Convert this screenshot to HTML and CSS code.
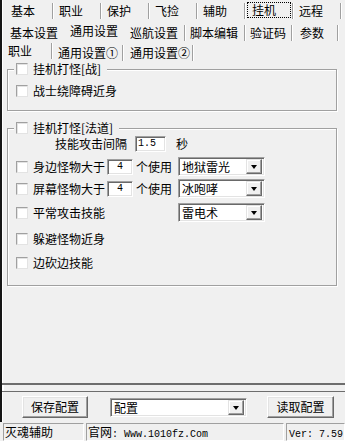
FILE: index.html
```html
<!DOCTYPE html>
<html lang="zh-CN">
<head>
    <meta charset="UTF-8">
    <title>灭魂辅助</title>
    <link rel="stylesheet" href="styles.css">
</head>
<body>
    <div class="window">
        <div class="main">
            <div class="tabs r1">
                <span class="tab">基本</span>
                <span class="tab">职业</span>
                <span class="tab">保护</span>
                <span class="tab">飞捡</span>
                <span class="tab">辅助</span>
                <span class="tab on"><span class="focus">挂机</span></span>
                <span class="tab">远程</span>
            </div>
            <div class="tabs r2">
                <span class="tab w60 pre">基本设置</span>
                <span class="tab w60 on">通用设置</span>
                <span class="tab w60">巡航设置</span>
                <span class="tab w60">脚本编辑</span>
                <span class="tab w47">验证码</span>
                <span class="tab w46">参数</span>
            </div>
            <div class="tabs r3">
                <span class="tab w49 on">职业</span>
                <span class="tab w71">通用设置①</span>
                <span class="tab w70">通用设置②</span>
            </div>

            <div class="group g1">
                <div class="group-title"><span class="cb"></span>挂机打怪[战]</div>
                <div class="row"><span class="cb"></span>战士绕障碍近身</div>
            </div>

            <div class="group g2">
                <div class="group-title"><span class="cb"></span>挂机打怪[法道]</div>
                <div class="row ra">
                    技能攻击间隔
                    <span class="field wide">1.5</span>
                    <span class="unit">秒</span>
                </div>
                <div class="row rb">
                    <span class="cb"></span>身边怪物大于
                    <span class="field">4</span>
                    <span class="use">个使用</span>
                    <span class="select"><span class="val">地狱雷光</span><span class="drop"></span></span>
                </div>
                <div class="row rc">
                    <span class="cb"></span>屏幕怪物大于
                    <span class="field">4</span>
                    <span class="use">个使用</span>
                    <span class="select"><span class="val">冰咆哮</span><span class="drop"></span></span>
                </div>
                <div class="row rd">
                    <span class="cb"></span>平常攻击技能
                    <span class="select push"><span class="val">雷电术</span><span class="drop"></span></span>
                </div>
                <div class="row re"><span class="cb"></span>躲避怪物近身</div>
                <div class="row rf"><span class="cb"></span>边砍边技能</div>
            </div>

            <div class="spacer"></div>
            <div class="sep"></div>

            <div class="actions">
                <span class="btn save">保存配置</span>
                <span class="select cfg"><span class="val">配置</span><span class="drop"></span></span>
                <span class="btn load">读取配置</span>
            </div>
        </div>

        <div class="status">
            <span class="pane p1">灭魂辅助</span>
            <span class="pane p2">官网<span class="mono">: Www.1010fz.Com</span></span>
            <span class="pane p3"><span class="mono">Ver: 7.59</span></span>
        </div>
    </div>
</body>
</html>
```

FILE: styles.css
```css
* {
    box-sizing: border-box;
}

body {
    margin: 0;
    background-color: #f0f0f0;
    color: #000;
    font-family: "Noto Sans CJK SC", "Noto Sans", sans-serif;
    font-size: 12px;
    line-height: 14px;
}

.window {
    width: 345px;
    height: 441px;
    display: flex;
    flex-direction: column;
    overflow: hidden;
}

.main {
    height: 422px;
    display: flex;
    flex-direction: column;
    border-left: 2px solid #161616;
    box-shadow: inset 1px 0 #fff;
}

/* tab strips */
.tabs {
    display: flex;
    padding-left: 3px;
    white-space: nowrap;
}

.r1 { height: 22px; }
.r2 { height: 20px; }
.r3 { height: 18px; padding-left: 1px; }

.tab {
    height: 16px;
    margin-top: 3px;
    line-height: 16px;
    padding-left: 6px;
    border-right: 1px solid #a0a0a0;
    box-shadow: 1px 0 #fff;
}

.r1 .tab { width: 48px; }

.r1 .on {
    padding-left: 2px;
    padding-right: 1px;
}

.focus {
    display: block;
    height: 16px;
    margin-top: -1px;
    padding-left: 4px;
    line-height: 14px;
    border: 1px dotted #000;
}

.r2 .tab { padding-left: 5px; }
.r2 .on,
.r3 .on { margin-top: 1px; }
.r2 .on,
.r2 .pre {
    border-right-color: transparent;
    box-shadow: none;
}

.w60 { width: 60px; }
.w47 { width: 47px; }
.w46 { width: 46px; padding-left: 8px !important; }
.w49 { width: 49px; padding-left: 5px; }
.w71 { width: 71px; padding-left: 6px; }
.w70 { width: 70px; padding-left: 7px; }

/* group boxes */
.group {
    margin: 0 8px 0 5px;
    border: 1px solid #a0a0a0;
    box-shadow: inset 1px 1px #fff, 1px 1px #fff;
}

.g1 {
    margin-top: 9px;
    padding-bottom: 12px;
}

.g2 {
    margin-top: 17px;
    padding-bottom: 13px;
}

.group-title {
    display: flex;
    align-items: center;
    width: fit-content;
    height: 14px;
    margin: -8px 0 0 6px;
    padding: 0 6px 0 2px;
    background-color: #f0f0f0;
}

.row {
    display: flex;
    align-items: center;
    height: 19px;
    padding-left: 8px;
    white-space: nowrap;
}

.g1 .row {
    height: 14px;
    margin-top: 8px;
}

.ra { height: 17px; padding-left: 47px; }
.rb { margin-top: 5px; }
.rc { margin-top: 3px; }
.rd { margin-top: 5px; }
.re { margin-top: 7px; }
.rf { margin-top: 5px; }

.cb {
    width: 12px;
    height: 12px;
    margin-right: 5px;
    flex-shrink: 0;
    background-color: #fff;
    border: 1px solid;
    border-color: #a0a0a0 #fff #fff #a0a0a0;
    box-shadow: inset 1px 1px #e3e3e3;
}

.group .cb {
    border-color: #a0a0a0 #e3e3e3 #e3e3e3 #a0a0a0;
}

/* edit boxes and combo boxes */
.field {
    width: 26px;
    height: 16px;
    margin-left: 2px;
    background-color: #fff;
    border: 1px solid;
    border-color: #a0a0a0 #fff #fff #a0a0a0;
    box-shadow: inset 1px 1px #696969, inset -1px -1px #e3e3e3;
    font-family: "Liberation Mono", monospace;
    font-size: 10px;
    line-height: 14px;
    text-align: center;
}

.field.wide {
    width: 31px;
    margin-left: 8px;
    padding-left: 2px;
    text-align: left;
}

.unit { margin-left: 10px; }
.use { margin-left: 3px; }

.select {
    display: flex;
    align-items: center;
    width: 87px;
    height: 19px;
    margin-left: 6px;
    padding: 2px;
    background-color: #fff;
    border: 1px solid;
    border-color: #a0a0a0 #fff #fff #a0a0a0;
    box-shadow: inset 1px 1px #696969, inset -1px -1px #e3e3e3;
}

.select.push { margin-left: 73px; }

.val {
    flex: 1;
    padding-left: 1px;
    line-height: 14px;
}

.drop {
    position: relative;
    width: 16px;
    height: 15px;
    background-color: #f0f0f0;
    border: 1px solid;
    border-color: #e3e3e3 #696969 #696969 #e3e3e3;
    box-shadow: inset -1px -1px #a0a0a0, inset 1px 1px #fff;
}

.drop::after {
    content: "";
    position: absolute;
    left: 4px;
    top: 5px;
    border-left: 3px solid transparent;
    border-right: 3px solid transparent;
    border-top: 4px solid #000;
}

/* bottom bar */
.spacer { flex: 1; }

.sep {
    height: 9px;
    border-top: 2px solid #6d6d6d;
    border-bottom: 1px solid #6d6d6d;
    box-shadow: inset 2px 0 #fff;
}

.actions {
    display: flex;
    align-items: flex-start;
    height: 30px;
    padding-top: 4px;
}

.btn {
    height: 22px;
    line-height: 20px;
    text-align: center;
    background-color: #f0f0f0;
    border: 1px solid;
    border-color: #fff #696969 #696969 #fff;
    box-shadow: inset -1px -1px #a0a0a0, inset 1px 1px #e3e3e3;
}

.save {
    width: 66px;
    margin-left: 20px;
}

.select.cfg {
    width: 137px;
    margin-left: 22px;
    margin-top: 2px;
}

.load {
    width: 67px;
    margin-left: 20px;
}

/* status bar */
.status {
    display: flex;
    height: 19px;
    padding: 1px 0 0 3px;
    white-space: nowrap;
}

.pane {
    height: 18px;
    padding-left: 1px;
    line-height: 16px;
    border: 1px solid;
    border-color: #a0a0a0 #fff #fff #a0a0a0;
}

.p1 { width: 81px; }
.p2 { width: 198px; margin-left: 2px; }
.p3 { flex: 1; margin-left: 2px; padding-left: 2px; }

.mono {
    font-family: "Liberation Mono", monospace;
    font-size: 10px;
}
```
